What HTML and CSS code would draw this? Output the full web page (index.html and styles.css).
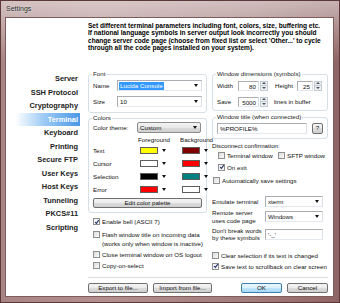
FILE: index.html
```html
<!DOCTYPE html>
<html lang="en">
<head>
  <meta charset="UTF-8">
  <title>Settings</title>
  <link rel="stylesheet" href="styles.css">
</head>
<body>
<div class="window">
  <div class="titlebar">Settings</div>
  <div class="client">
    <ul class="nav">
      <li>Server</li>
      <li>SSH Protocol</li>
      <li>Cryptography</li>
      <li class="active">Terminal</li>
      <li>Keyboard</li>
      <li>Printing</li>
      <li>Secure FTP</li>
      <li>User Keys</li>
      <li>Host Keys</li>
      <li>Tunneling</li>
      <li>PKCS#11</li>
      <li>Scripting</li>
    </ul>

    <div class="content">
      <p class="intro">Set different terminal parameters including font, colors, size, buffering etc.<br>
      If national language symbols in server output look incorrectly you should<br>
      change server code page (choose from fixed list or select 'Other...' to cycle<br>
      through all the code pages installed on your system).</p>

      <div class="columns">
        <!-- left column -->
        <div class="col">
          <fieldset class="group font-group">
            <legend>Font</legend>
            <div class="row"><span class="lbl w24">Name</span><div class="combo grow"><span class="sel">Lucida Console</span></div></div>
            <div class="row"><span class="lbl w24">Size</span><div class="combo grow">10</div></div>
          </fieldset>

          <fieldset class="group colors-group">
            <legend>Colors</legend>
            <div class="row"><span class="lbl w44">Color theme:</span><div class="combo flat w64">Custom</div></div>
            <div class="color-grid">
              <span></span><span class="head">Foreground</span><span class="head">Background</span>
              <span>Text</span>
              <div class="swatch"><i style="background:#ffff00"></i></div>
              <div class="swatch"><i style="background:#800000"></i></div>
              <span>Cursor</span>
              <div class="swatch"><i style="background:#ffffff"></i></div>
              <div class="swatch"><i style="background:#ff0000"></i></div>
              <span>Selection</span>
              <div class="swatch"><i style="background:#000000"></i></div>
              <div class="swatch"><i style="background:#008080"></i></div>
              <span>Error</span>
              <div class="swatch"><i style="background:#ff0000"></i></div>
              <div class="swatch"><i style="background:#ffffff"></i></div>
            </div>
            <div class="btn palette">Edit color palette</div>
          </fieldset>

          <div class="checks">
            <div class="check bell"><span class="box on"><svg viewBox="0 0 7 7"><path d="M1.3 3.6 L2.8 5.1 L5.6 1.4"/></svg></span>Enable bell (ASCII 7)</div>
            <div class="check"><span class="box"></span>Flash window title on incoming data<br>(works only when window is inactive)</div>
            <div class="check"><span class="box"></span>Close terminal window on OS logout</div>
            <div class="check"><span class="box"></span>Copy-on-select</div>
          </div>
        </div>

        <!-- right column -->
        <div class="col">
          <fieldset class="group dim-group">
            <legend>Window dimensions (symbols)</legend>
            <div class="row">
              <span class="lbl w21">Width</span>
              <div class="num w21">80</div><div class="spin"><b class="up"></b><b class="down"></b></div>
              <span class="lbl w22 gap7">Height</span>
              <div class="num w16">25</div><div class="spin"><b class="up"></b><b class="down"></b></div>
            </div>
            <div class="row">
              <span class="lbl w21">Save</span>
              <div class="num w21">5000</div><div class="spin"><b class="up"></b><b class="down"></b></div>
              <span class="lbl gap6">lines in buffer</span>
            </div>
          </fieldset>

          <fieldset class="group title-group">
            <legend>Window title (when connected)</legend>
            <div class="row">
              <div class="edit w91">%PROFILE%</div>
              <div class="btn help">?</div>
            </div>
          </fieldset>

          <div class="disc">Disconnect confirmation:</div>
          <div class="check-line indent">
            <div class="check w60"><span class="box"></span>Terminal window</div>
            <div class="check"><span class="box"></span>SFTP window</div>
          </div>
          <div class="check indent exit"><span class="box on"><svg viewBox="0 0 7 7"><path d="M1.3 3.6 L2.8 5.1 L5.6 1.4"/></svg></span>On exit</div>
          <div class="check autosave"><span class="box"></span>Automatically save settings</div>

          <div class="field emulate"><span class="lbl w53">Emulate terminal</span><div class="combo w58">xterm</div></div>
          <div class="field remote"><span class="lbl w53 two">Remote server<br>uses code page</span><div class="combo w58">Windows</div></div>
          <div class="field breaks"><span class="lbl w53 two">Don't break words<br>by these symbols</span><div class="edit w58">'-_'</div></div>

          <div class="check clear"><span class="box"></span>Clear selection if its text is changed</div>
          <div class="check scroll"><span class="box on"><svg viewBox="0 0 7 7"><path d="M1.3 3.6 L2.8 5.1 L5.6 1.4"/></svg></span>Save text to scrollback on clear screen</div>
        </div>
      </div>

      <div class="footer">
        <div class="btn w60">Export to file...</div>
        <div class="btn w59">Import from file...</div>
        <div class="spacer"></div>
        <div class="btn default w41">OK</div>
        <div class="btn w41">Cancel</div>
      </div>
    </div>
  </div>
</div>
</body>
</html>
```

FILE: styles.css
```css
* {
  box-sizing: border-box;
}
body {
  margin: 0;
  font-family: "Liberation Sans", Arial, sans-serif;
  font-size: 6.2px;
  color: #111;
}
.window {
  width: 340px;
  height: 303px;
  display: flex;
  flex-direction: column;
  border: 1px solid #5d3838;
  padding: 0 5px 5px 4px;
  background:
    linear-gradient(180deg, rgba(255,255,255,0.5), rgba(255,255,255,0) 60px),
    linear-gradient(90deg, #a98484, #b39191 30%, #a27b7b 75%, #8f6464);
}
.titlebar {
  height: 16px;
  line-height: 15px;
  font-size: 7px;
  color: #2a2a2a;
  padding-left: 1px;
  text-shadow: 0 0 3px #fff;
}
.client {
  flex: 1;
  display: flex;
  background: #fff;
  border: 1px solid #7e5c5c;
}

/* left navigation */
.nav {
  width: 82px;
  margin: 0;
  padding: 54px 0 0;
  list-style: none;
}
.nav li {
  height: 13.5px;
  line-height: 13.5px;
  margin: 0 8px 0 9px;
  padding-right: 2px;
  text-align: right;
  font-weight: bold;
  font-size: 7.4px;
  color: #222;
}
.nav li.active {
  color: #fff;
  background: linear-gradient(90deg, #ffffff, #9ccaf5 45%, #4a98e6);
}

/* main area */
.content {
  flex: 1;
  display: flex;
  flex-direction: column;
  padding: 4px 5px 3px 0;
}
.intro {
  margin: 0;
  font-weight: bold;
  font-size: 6.55px;
  line-height: 7.3px;
  white-space: nowrap;
  color: #000;
}
.columns {
  display: grid;
  grid-template-columns: 119px 116px;
  column-gap: 5px;
  margin-top: 19px;
}
.col {
  display: flex;
  flex-direction: column;
}
.group {
  margin: 0;
  min-width: 0;
  border: 1px solid #d5dfe5;
  border-radius: 3px;
  padding: 2px 4px 5px 4px;
}
.group legend {
  padding: 0 1px;
  margin-left: -1px;
  line-height: 8px;
  font-size: 6.2px;
  color: #222;
}
.row {
  display: flex;
  align-items: center;
  height: 11px;
}
.row + .row {
  margin-top: 5px;
}
.lbl {
  white-space: nowrap;
}
.w21 { width: 21px; }
.w22 { width: 22px; }
.w24 { width: 24px; }
.w44 { width: 44px; }
.w53 { width: 53px; }
.w16 { width: 16px; }
.gap7 { margin-left: 7px; }
.gap6 { margin-left: 6px; }

/* inputs */
.combo,
.edit,
.num {
  height: 11px;
  line-height: 9px;
  border: 1px solid #abadb3;
  border-right-color: #dbdfe6;
  border-bottom-color: #e3e9ef;
  background: #fff;
  padding: 0 2px;
  white-space: nowrap;
}
.combo {
  display: flex;
  align-items: center;
}
.combo::after {
  content: "";
  margin-left: auto;
  margin-right: 1px;
  border-left: 2.5px solid transparent;
  border-right: 2.5px solid transparent;
  border-top: 3px solid #111;
}
.combo.grow {
  flex: 1;
}
.combo.flat {
  border: 1px solid #8d8d8d;
  border-radius: 2px;
  background: linear-gradient(#f3f3f3, #e8e8e8 50%, #dcdcdc 50%, #d0d0d0);
}
.w64 { width: 64px; }
.w58 { width: 58px; }
.w91 { width: 91px; }
.sel {
  background: #3399ff;
  color: #fff;
  padding: 0 1px;
  margin-left: -1px;
  line-height: 8px;
}
.num {
  height: 10px;
  text-align: right;
}
.spin {
  width: 8px;
  height: 10px;
  margin-left: 1px;
  display: flex;
  flex-direction: column;
  border: 1px solid #c5cbd3;
  background: #eef1f4;
}
.spin b {
  flex: 1;
  display: flex;
  align-items: center;
  justify-content: center;
}
.spin b + b {
  border-top: 1px solid #c5cbd3;
}
.spin .up::before {
  content: "";
  border-left: 2px solid transparent;
  border-right: 2px solid transparent;
  border-bottom: 2px solid #4b5563;
}
.spin .down::before {
  content: "";
  border-left: 2px solid transparent;
  border-right: 2px solid transparent;
  border-top: 2px solid #4b5563;
}

/* colors */
.colors-group {
  margin-top: 1px;
  padding-top: 0;
  padding-bottom: 4px;
}
.color-grid {
  display: grid;
  grid-template-columns: 34px 31px 31px;
  grid-template-rows: 10px;
  grid-auto-rows: 13px;
  column-gap: 11px;
  align-items: center;
  margin-top: 1px;
}
.color-grid .head {
  text-align: center;
}
.swatch {
  display: flex;
  align-items: center;
  height: 10px;
  padding-left: 2px;
}
.swatch i {
  width: 18px;
  height: 7px;
  border: 1px solid #5e5e5e;
}
.swatch::after {
  content: "";
  margin-left: auto;
  margin-right: 3px;
  border-left: 2.5px solid transparent;
  border-right: 2.5px solid transparent;
  border-top: 3px solid #111;
}

/* buttons */
.btn {
  height: 10px;
  line-height: 8px;
  text-align: center;
  border: 1px solid #707070;
  border-radius: 2px;
  background: linear-gradient(#f4f4f4, #ebebeb 50%, #dddddd 50%, #cfcfcf);
  white-space: nowrap;
}
.btn.palette {
  margin-top: 2px;
}
.btn.help {
  width: 11px;
  height: 11px;
  margin-left: 5px;
}
.btn.default {
  border-color: #3c7fb1;
  background: linear-gradient(#eaf6fd, #d9f0fc 50%, #bee6fd 50%, #a7d9f5);
}
.w60 { width: 60px; }
.w59 { width: 59px; }
.w41 { width: 41px; }

/* checkboxes */
.check {
  display: flex;
  align-items: flex-start;
  line-height: 9px;
  white-space: nowrap;
}
.box {
  width: 7px;
  height: 7px;
  flex: none;
  margin: 1px 2px 0 0;
  border: 1px solid #8e8f8f;
  background: linear-gradient(135deg, #dcdcdc, #fbfbfb);
}
.box svg {
  display: block;
  width: 5px;
  height: 5px;
}
.box svg path {
  fill: none;
  stroke: #23356b;
  stroke-width: 1.3;
}
.box.on {
  background: #f4f4f4;
}
.box.on svg {
  width: 6px;
  height: 6px;
  margin: -0.5px;
}
.checks {
  display: flex;
  flex-direction: column;
  gap: 2px;
  margin-top: 4px;
  padding-left: 5px;
}
.check.bell {
  margin-bottom: 2px;
}

/* right column bits */
.dim-group {
  padding-bottom: 3px;
}
.title-group {
  margin-top: 2px;
  padding-bottom: 4px;
}
.disc {
  line-height: 9px;
  margin-top: 1.5px;
}
.check-line {
  display: flex;
  margin-top: 1px;
}
.indent {
  padding-left: 6px;
}
.check.exit {
  margin-top: 3px;
}
.check.autosave {
  margin-top: 4px;
  padding-left: 1px;
}
.field {
  display: flex;
  align-items: center;
}
.field.emulate {
  margin-top: 11.5px;
  height: 11px;
}
.field.remote {
  margin-top: 2px;
  height: 15px;
}
.field.breaks {
  margin-top: 2px;
  height: 16px;
}
.two {
  line-height: 7.4px;
}
.check.clear {
  margin-top: 8.5px;
}
.check.scroll {
  margin-top: 2px;
}

/* bottom buttons */
.footer {
  margin-top: auto;
  display: flex;
  gap: 5px;
  border-top: 1px solid #dcdcdc;
  padding-top: 5px;
}
.spacer {
  flex: 1;
}
```
